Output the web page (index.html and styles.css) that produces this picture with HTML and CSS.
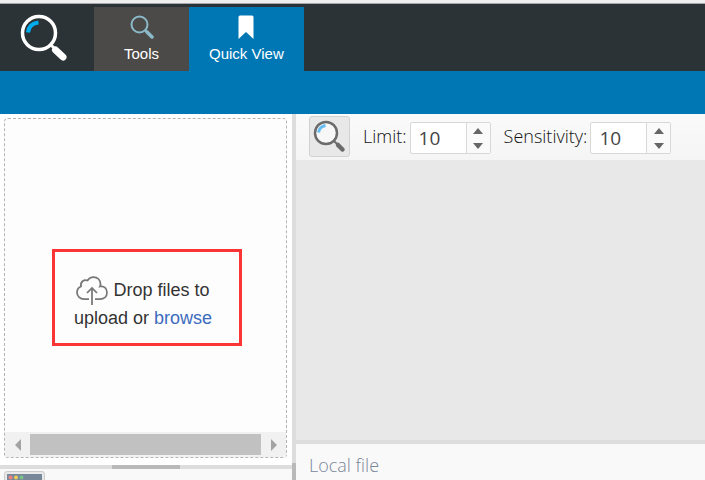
FILE: index.html
```
<!DOCTYPE html>
<html lang="en">
<head>
<meta charset="utf-8">
<title>Quick View</title>
<link rel="stylesheet" href="styles.css">
</head>
<body>
<header class="header">
  <a class="brand" href="#" aria-label="Home">
    <svg width="48" height="48" viewBox="0 0 48 48" fill="none" stroke-linecap="round">
      <circle cx="19" cy="19" r="16.500" stroke="#fff" stroke-width="3.500"/>
      <path d="M8 18.500Q9 9.500 18.500 8.500" stroke="#00aeef" stroke-width="4" stroke-linecap="butt"/>
      <path d="M31 31l4 4" stroke="#fff" stroke-width="3"/>
      <path d="M35.500 36l7.500 7" stroke="#fff" stroke-width="7"/>
    </svg>
  </a>
  <nav class="tabs">
    <a class="tab tab-tools" href="#">
      <svg width="24" height="24" viewBox="0 0 24 24" fill="none" stroke="#8bb9c9">
        <circle cx="9.500" cy="9.500" r="8" stroke-width="2"/>
        <path d="M15 15l2 2" stroke-width="2.500"/>
        <path d="M17 17l5 5" stroke-width="3.500" stroke-linecap="round"/>
      </svg>
      <span>Tools</span>
    </a>
    <a class="tab tab-view" href="#" aria-current="page">
      <svg width="24" height="24" viewBox="0 0 24 24" fill="#fff"><path d="M4.500 24V2q0-1.500 1.500-1.500h12q1.500 0 1.500 1.500v22L12 17z"/></svg>
      <span>Quick View</span>
    </a>
  </nav>
</header>
<div class="ribbon"></div>
<main class="workspace">
  <aside class="side">
    <section class="dropzone">
      <div class="drop-area">
        <p class="prompt">
          <svg class="cloud" width="32" height="30" viewBox="0 0 32 30" fill="none" stroke="#777" stroke-width="1.750">
            <path d="M13 23H8C4 23 1 20 1 16.500c0-3 1.500-5 4-6C4 6 8 3 11.500 4.500 13 2 15 1 17.500 1c4 0 7 3 7 7 0 1 0 1.500-.5 2.500 4-1 7 2 7 6s-3 6.500-7 6.500h-5"/>
            <path d="M16 29V12M11 17l5-5 5 5"/>
          </svg>
          Drop files to<br>upload or <a href="#">browse</a>
        </p>
      </div>
      <div class="scroll">
        <button class="scroll-arrow" aria-label="Scroll left"><svg width="6" height="12" viewBox="0 0 6 12"><path d="M6 0v12L0 6z"/></svg></button>
        <div class="scroll-thumb"></div>
        <button class="scroll-arrow" aria-label="Scroll right"><svg width="6" height="12" viewBox="0 0 6 12"><path d="M0 0v12l6-6z"/></svg></button>
      </div>
    </section>
    <div class="split-row"><div class="grip"></div></div>
    <div class="side-bar">
      <button class="window-button" aria-label="Windows">
        <svg width="35" height="32" viewBox="0 0 35 32"><path fill="#778899" d="M0 0h35v32H0z"/><circle cx="3.500" cy="3.500" r="2" fill="#f08080"/><circle cx="9" cy="3.500" r="2" fill="#f0cc55"/><circle cx="14.500" cy="3.500" r="2" fill="#77c38b"/></svg>
      </button>
    </div>
  </aside>
  <div class="split-col"><div class="grip-col"></div></div>
  <section class="content">
    <form class="toolbar">
      <button class="search" type="button" aria-label="Search">
        <svg width="33" height="33" viewBox="0 0 33 33" fill="none" stroke="#6b6b6b" stroke-linecap="round">
          <circle cx="13" cy="13" r="11" fill="#f7f7f7" stroke-width="2.500"/>
          <path d="M5.500 12.500Q6.500 6.500 12.500 5.500" stroke="#66bdf2" stroke-width="3" stroke-linecap="butt"/>
          <path d="M21 21l3 3" stroke-width="2"/>
          <path d="M25 25l4.500 4.500" stroke-width="4.500"/>
        </svg>
      </button>
      <div class="field">
        <label for="limit">Limit:</label>
        <div class="spinner">
          <input id="limit" type="text" value="10">
          <div class="steps">
            <button type="button" aria-label="Increase limit"><svg width="10" height="6" viewBox="0 0 10 6"><path d="M0 6L5 0l5 6z"/></svg></button>
            <button type="button" aria-label="Decrease limit"><svg width="10" height="6" viewBox="0 0 10 6"><path d="M0 0l5 6 5-6z"/></svg></button>
          </div>
        </div>
      </div>
      <div class="field">
        <label for="sensitivity">Sensitivity:</label>
        <div class="spinner">
          <input id="sensitivity" type="text" value="10">
          <div class="steps">
            <button type="button" aria-label="Increase sensitivity"><svg width="10" height="6" viewBox="0 0 10 6"><path d="M0 6L5 0l5 6z"/></svg></button>
            <button type="button" aria-label="Decrease sensitivity"><svg width="10" height="6" viewBox="0 0 10 6"><path d="M0 0l5 6 5-6z"/></svg></button>
          </div>
        </div>
      </div>
    </form>
    <div class="canvas"></div>
    <footer class="status">Local file</footer>
  </section>
</main>
</body>
</html>
```
FILE: styles.css
```
* { box-sizing: border-box; }

body {
  display: flex;
  flex-direction: column;
  height: 100vh;
  margin: 0;
  overflow: hidden;
  border-top: 3px solid #efefef;
  background: #fff;
  font-family: "Liberation Sans", Arial, sans-serif;
}

button { padding: 0; border: 0; background: none; }
svg { display: block; }

.header {
  display: flex;
  flex: none;
  height: 68px;
  padding-top: 3px;
  border-top: 1px solid #a9a5ad;
  background: #2b3336;
}

.brand { width: 94px; padding: 7px 20px; }
.tabs { display: flex; }

.tab {
  display: flex;
  flex-direction: column;
  align-items: center;
  gap: 4px;
  padding: 8px 20px 0;
  color: #fff;
  font-size: 15px;
  line-height: 22px;
  text-decoration: none;
}

.tab-tools { padding: 8px 30px 0; background: #4c4a48; }
.tab-view { background: #0077b5; }

.ribbon { flex: none; height: 43px; background: #0077b5; }

.workspace { display: flex; flex: 1; min-height: 0; }

.side { display: flex; flex: 0 0 292px; flex-direction: column; min-height: 0; }

.dropzone {
  display: flex;
  flex: 1;
  flex-direction: column;
  margin: 4px 5px 7px 4px;
  border: 1px dashed #b5b5b5;
  border-radius: 4px;
  background: #fdfdfd;
}

.drop-area { display: flex; flex: 1; align-items: center; justify-content: center; padding: 44px 0 0 3px; }

.prompt {
  margin: 0;
  padding: 24px 27px 11px 19px;
  border: 3px solid #fb3535;
  color: #333;
  font-size: 18px;
  line-height: 28px;
  text-align: center;
  white-space: nowrap;
}

.prompt a { color: #3b6bbd; text-decoration: none; }
.cloud { display: inline-block; margin: -2px 0; vertical-align: middle; }

.scroll { display: flex; flex: none; height: 25px; padding: 2px 0; background: #f1f1f1; }
.scroll-arrow { display: flex; width: 25px; align-items: center; justify-content: center; }
.scroll-arrow svg { fill: #a3a3a3; }
.scroll-thumb { flex: 1; background: #c1c1c1; }

.split-row { display: flex; flex: none; justify-content: center; height: 4px; background: #ddd; }
.grip { width: 68px; background: #b9b9b9; }

.side-bar { flex: none; height: 11px; padding: 2px 4px; overflow: hidden; background: #f9f9f9; }
.window-button { padding: 2px; border: 1px solid #ccc; border-radius: 3px; background: #e9e9e9; }

.split-col { display: flex; flex: 0 0 4px; flex-direction: column; justify-content: flex-end; background: #ddd; }
.grip-col { height: 17px; background: #b9b9b9; }

.content { display: flex; flex: 1; flex-direction: column; min-width: 0; font-family: "Open Sans", sans-serif; font-weight: 300; }

.toolbar {
  display: flex;
  flex: none;
  gap: 13px;
  align-items: flex-start;
  height: 46px;
  padding: 2px 13px;
  background: linear-gradient(#fafafa, #f5f5f5);
}

.search {
  display: flex;
  align-items: center;
  justify-content: center;
  width: 41px;
  height: 41px;
  border: 1px solid #d2d2d2;
  border-radius: 3px;
  background: #e8e8e8;
}

.field { display: flex; gap: 3px; padding-top: 6px; color: #111; font-size: 18px; line-height: 28px; }

.spinner {
  display: flex;
  width: 81px;
  height: 32px;
  border: 1px solid #d8d8d8;
  border-radius: 2px;
  background: #fff;
}

.spinner input {
  flex: 1;
  min-width: 0;
  padding: 0 8px;
  border: 0;
  background: none;
  color: #444;
  font: 400 19px "Open Sans", sans-serif;
}

.steps { display: flex; flex: 0 0 24px; flex-direction: column; border-left: 1px solid #d8d8d8; background: #fafafa; }
.steps button { display: flex; flex: 1; align-items: center; justify-content: center; }
.steps svg { fill: #666; }

.canvas { flex: 1; border-bottom: 4px solid #ddd; background: #e8e8e8; }
.status { flex: none; height: 36px; padding: 7px 13px; background: #f9f9f9; color: #7a879b; font-size: 18px; line-height: 28px; }
```
